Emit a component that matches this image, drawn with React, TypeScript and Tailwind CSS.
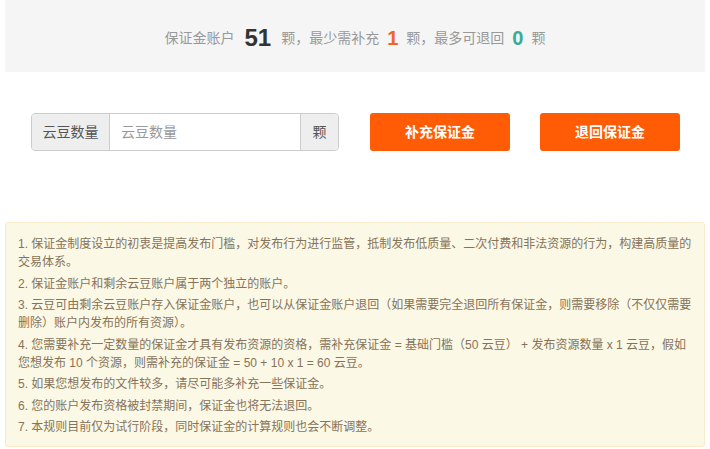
import { FC, ReactElement } from "react";

const NOTES: string[] = [
  "1. 保证金制度设立的初衷是提高发布门槛，对发布行为进行监管，抵制发布低质量、二次付费和非法资源的行为，构建高质量的交易体系。",
  "2. 保证金账户和剩余云豆账户属于两个独立的账户。",
  "3. 云豆可由剩余云豆账户存入保证金账户，也可以从保证金账户退回（如果需要完全退回所有保证金，则需要移除（不仅仅需要删除）账户内发布的所有资源）。",
  "4. 您需要补充一定数量的保证金才具有发布资源的资格，需补充保证金 = 基础门槛（50 云豆） + 发布资源数量 x 1 云豆，假如您想发布 10 个资源，则需补充的保证金 = 50 + 10 x 1 = 60 云豆。",
  "5. 如果您想发布的文件较多，请尽可能多补充一些保证金。",
  "6. 您的账户发布资格被封禁期间，保证金也将无法退回。",
  "7. 本规则目前仅为试行阶段，同时保证金的计算规则也会不断调整。",
];

const App: FC = (): ReactElement => {
  return (
    <div
      className="min-h-[449px] bg-white px-[5px]"
      style={{ fontFamily: '"Liberation Sans", "Noto Sans CJK SC", sans-serif' }}
    >
      {/* summary */}
      <div className="h-[72px] bg-[#f5f5f5] flex items-center justify-center pt-[4px] text-sm text-[#999]">
        <span>保证金账户</span>
        <span className="mx-[10px] text-[24px] font-bold text-[#333] leading-none">51</span>
        <span>颗，最少需补充</span>
        <span className="mx-[8px] text-[20px] font-bold text-[#f0642a] leading-none">1</span>
        <span>颗，最多可退回</span>
        <span className="mx-[8px] text-[20px] font-bold text-[#3aaa9c] leading-none">0</span>
        <span>颗</span>
      </div>

      {/* actions */}
      <div className="flex items-center mt-[41px] pl-[26px]">
        <div className="flex h-[38px] w-[308px] border border-[#ccc] rounded-[4px] overflow-hidden text-sm">
          <span className="w-[78px] shrink-0 flex items-center justify-center bg-[#eee] text-[#555] border-r border-[#ccc]">
            云豆数量
          </span>
          <input
            type="text"
            placeholder="云豆数量"
            className="flex-1 min-w-0 px-[11px] outline-none text-[#555] placeholder:text-[#999]"
          />
          <span className="w-[38px] shrink-0 flex items-center justify-center bg-[#eee] text-[#555] border-l border-[#ccc]">
            颗
          </span>
        </div>
        <button
          type="button"
          className="ml-[31px] w-[140px] h-[38px] rounded-[3px] bg-[#ff5c05] text-white text-sm font-bold"
        >
          补充保证金
        </button>
        <button
          type="button"
          className="ml-[30px] w-[140px] h-[38px] rounded-[3px] bg-[#ff5c05] text-white text-sm font-bold"
        >
          退回保证金
        </button>
      </div>

      {/* notes */}
      <div className="mt-[71px] border border-[#faebcc] bg-[#fcf8e6] rounded-[3px] pt-[12px] pb-[10px] pl-[12px] pr-[10px] text-xs leading-[18px] text-[#85735a]">
        {NOTES.map((note) => (
          <p key={note} className="mb-[3.5px] last:mb-0">
            {note}
          </p>
        ))}
      </div>
    </div>
  );
};

export default App;
